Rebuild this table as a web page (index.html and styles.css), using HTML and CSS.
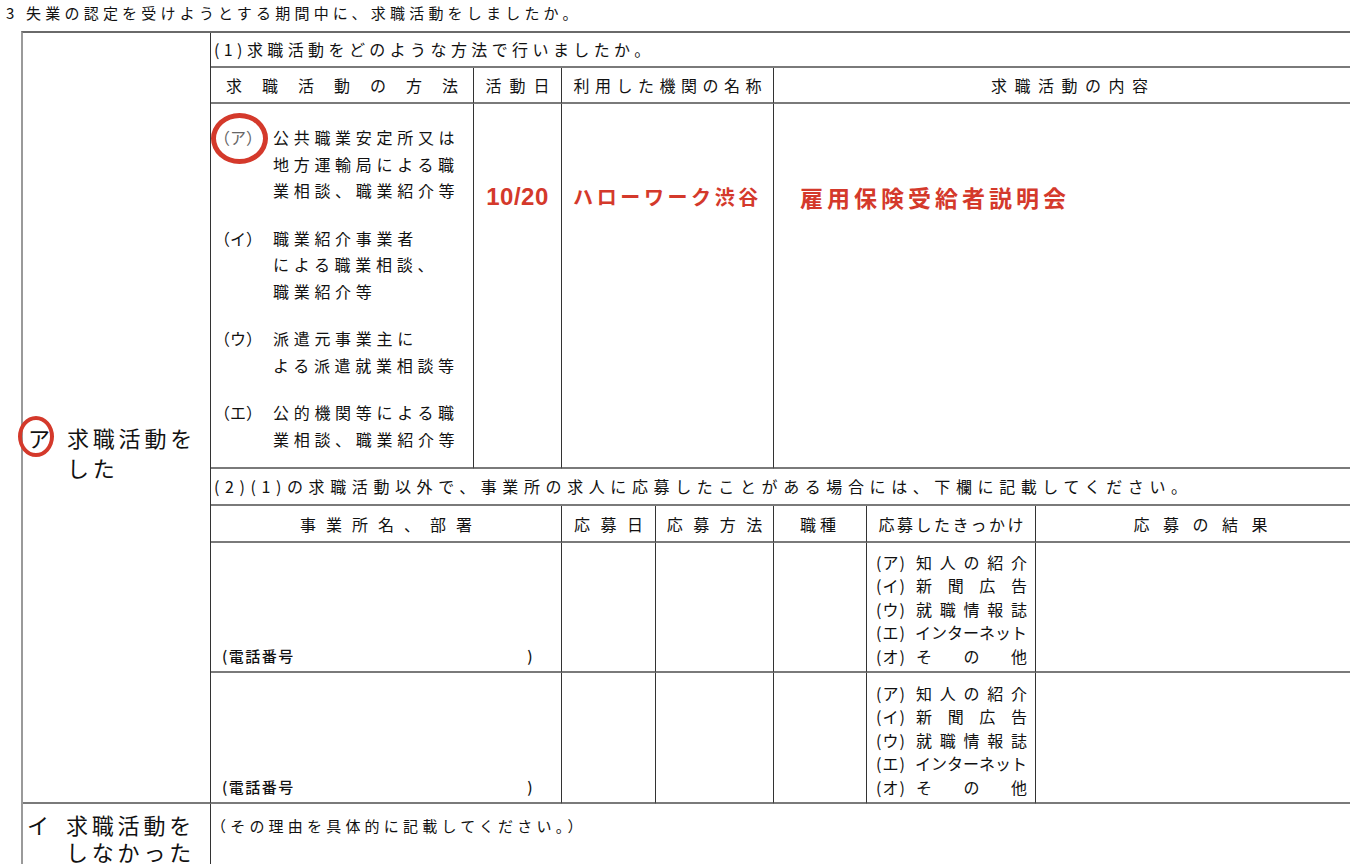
FILE: index.html
```html
<!DOCTYPE html>
<html lang="ja">
<head>
<meta charset="utf-8">
<title>求職活動の状況</title>
<link rel="stylesheet" href="styles.css">
</head>
<body>
<p class="title">3 失業の認定を受けようとする期間中に、求職活動をしましたか。</p>
<div class="form">
  <div class="cell did">
    <div class="choice">
      <span class="choice-mark">ア<span class="ring ring-choice"></span></span>
      <span class="choice-text">求職活動を<br>した</span>
    </div>
  </div>

  <div class="cell q q1">(1)求職活動をどのような方法で行いましたか。</div>

  <div class="cell th th-method r2 c2">求職活動の方法</div>
  <div class="cell th th-day r2 c3">活動日</div>
  <div class="cell th th-agency r2 c45">利用した機関の名称</div>
  <div class="cell th th-content r2 c68">求職活動の内容</div>

  <div class="cell methods r3 c2">
    <div class="item"><span class="label">（ア）<span class="ring ring-method"></span></span><span class="body">公共職業安定所又は<br>地方運輸局による職<br>業相談、職業紹介等</span></div>
    <div class="item"><span class="label">（イ）</span><span class="body">職業紹介事業者<br>による職業相談、<br>職業紹介等</span></div>
    <div class="item"><span class="label">（ウ）</span><span class="body">派遣元事業主に<br>よる派遣就業相談等</span></div>
    <div class="item"><span class="label">（エ）</span><span class="body">公的機関等による職<br>業相談、職業紹介等</span></div>
  </div>
  <div class="cell entry r3 c3"><span class="red date">10/20</span></div>
  <div class="cell entry r3 c45"><span class="red agency">ハローワーク渋谷</span></div>
  <div class="cell entry entry-left r3 c68"><span class="red detail">雇用保険受給者説明会</span></div>

  <div class="cell q q2">(2)(1)の求職活動以外で、事業所の求人に応募したことがある場合には、下欄に記載してください。</div>

  <div class="cell th th-office r5 c23">事業所名、部署</div>
  <div class="cell th th-wide r5 c4">応募日</div>
  <div class="cell th th-wide r5 c5">応募方法</div>
  <div class="cell th r5 c6">職種</div>
  <div class="cell th th-trigger r5 c7">応募したきっかけ</div>
  <div class="cell th th-result r5 c8">応募の結果</div>

  <div class="cell office r6 c23"><span>(電話番号</span><span>)</span></div>
  <div class="cell r6 c4"></div>
  <div class="cell r6 c5"></div>
  <div class="cell r6 c6"></div>
  <div class="cell trigger r6 c7">
    <div class="opt"><span class="olabel">(ア)</span><span class="ochars"><span>知</span><span>人</span><span>の</span><span>紹</span><span>介</span></span></div>
    <div class="opt"><span class="olabel">(イ)</span><span class="ochars"><span>新</span><span>聞</span><span>広</span><span>告</span></span></div>
    <div class="opt"><span class="olabel">(ウ)</span><span class="ochars"><span>就</span><span>職</span><span>情</span><span>報</span><span>誌</span></span></div>
    <div class="opt"><span class="olabel">(エ)</span><span class="ochars"><span>イ</span><span>ン</span><span>タ</span><span>ー</span><span>ネ</span><span>ッ</span><span>ト</span></span></div>
    <div class="opt"><span class="olabel">(オ)</span><span class="ochars"><span>そ</span><span>の</span><span>他</span></span></div>
  </div>
  <div class="cell r6 c8"></div>

  <div class="cell office r7 c23"><span>(電話番号</span><span>)</span></div>
  <div class="cell r7 c4"></div>
  <div class="cell r7 c5"></div>
  <div class="cell r7 c6"></div>
  <div class="cell trigger r7 c7">
    <div class="opt"><span class="olabel">(ア)</span><span class="ochars"><span>知</span><span>人</span><span>の</span><span>紹</span><span>介</span></span></div>
    <div class="opt"><span class="olabel">(イ)</span><span class="ochars"><span>新</span><span>聞</span><span>広</span><span>告</span></span></div>
    <div class="opt"><span class="olabel">(ウ)</span><span class="ochars"><span>就</span><span>職</span><span>情</span><span>報</span><span>誌</span></span></div>
    <div class="opt"><span class="olabel">(エ)</span><span class="ochars"><span>イ</span><span>ン</span><span>タ</span><span>ー</span><span>ネ</span><span>ッ</span><span>ト</span></span></div>
    <div class="opt"><span class="olabel">(オ)</span><span class="ochars"><span>そ</span><span>の</span><span>他</span></span></div>
  </div>
  <div class="cell r7 c8"></div>

  <div class="cell not">
    <div class="choice choice-not">
      <span class="choice-mark">イ</span>
      <span class="choice-text">求職活動を<br>しなかった</span>
    </div>
  </div>
  <div class="cell reason">（その理由を具体的に記載してください。）</div>
</div>
</body>
</html>
```

FILE: styles.css
```css
* { box-sizing: border-box; }

html, body {
  margin: 0;
  padding: 0;
  background: #ffffff;
}

body {
  width: 1350px;
  height: 864px;
  overflow: hidden;
  font-family: "Noto Sans CJK JP", "Noto Sans CJK SC", sans-serif;
  font-weight: 400;
  color: #111111;
}

.title {
  margin: 0;
  height: 31px;
  padding: 3px 0 0 6px;
  font-size: 15px;
  line-height: 20px;
  letter-spacing: 4.2px;
  white-space: nowrap;
}

.form {
  margin-left: 21px;
  width: 1345px;
  display: grid;
  grid-template-columns: 188px 263px 88px 94px 118px 93px 169px 330px;
  grid-template-rows: 35px 36px 365px 37px 37px 130px 131px 70px;
  border-top: 2px solid #6a6a6a;
  border-left: 2px solid #9a9a9a;
}

.cell {
  border-right: 1px solid #333333;
  border-bottom: 2px solid #7a7a7a;
  font-size: 16px;
  line-height: 20px;
  letter-spacing: 4px;
  white-space: nowrap;
  position: relative;
}

/* placement */
.r2 { grid-row: 2; }
.r3 { grid-row: 3; }
.r5 { grid-row: 5; }
.r6 { grid-row: 6; }
.r7 { grid-row: 7; }
.c2 { grid-column: 2; }
.c3 { grid-column: 3; }
.c4 { grid-column: 4; }
.c5 { grid-column: 5; }
.c6 { grid-column: 6; }
.c7 { grid-column: 7; }
.c8 { grid-column: 8; }
.c23 { grid-column: 2 / 4; }
.c45 { grid-column: 4 / 6; }
.c68 { grid-column: 6 / 9; }

.did { grid-column: 1; grid-row: 1 / 8; padding: 389px 0 0 5px; }
.q1 { grid-column: 2 / 9; grid-row: 1; letter-spacing: 4.4px; }
.q2 { grid-column: 2 / 9; grid-row: 4; letter-spacing: 5.6px; }
.not { grid-column: 1; grid-row: 8; padding: 7px 0 0 4px; }
.reason {
  grid-column: 2 / 9;
  grid-row: 8;
  padding: 12px 0 0 0;
  font-size: 15px;
  letter-spacing: 4.2px;
}

/* question rows */
.q {
  display: flex;
  align-items: center;
  padding-left: 3px;
  padding-bottom: 1px;
}

/* headers */
.th {
  display: flex;
  align-items: center;
  justify-content: center;
}
.th-method { letter-spacing: 20px; padding-left: 20px; }
.th-day { letter-spacing: 8px; padding-left: 8px; }
.th-agency { letter-spacing: 5.5px; padding-left: 5.5px; }
.th-content { letter-spacing: 7.5px; padding-left: 7.5px; }
.th-office { letter-spacing: 10px; padding-left: 10px; }
.th-wide { letter-spacing: 10.5px; padding-left: 10.5px; }
.th-trigger { letter-spacing: 2.5px; padding-left: 2.5px; }
.th-result { letter-spacing: 13.5px; padding-left: 13.5px; }

/* choice (ア / イ) */
.choice {
  display: flex;
  font-size: 22px;
  line-height: 30px;
  letter-spacing: 3.8px;
}
.choice-mark {
  position: relative;
  width: 39px;
  letter-spacing: 0;
}
.choice-not {
  line-height: 27px;
}

.ring {
  position: absolute;
  border: 4px solid #d4392b;
  border-radius: 50%;
}
.ring-choice {
  left: -10px;
  top: -6px;
  width: 36px;
  height: 41px;
  border-width: 4.5px;
}
.ring-method {
  left: -3px;
  top: -11px;
  width: 57px;
  height: 51px;
  border-width: 5px;
}

/* methods list */
.methods {
  display: flex;
  flex-direction: column;
  gap: 21px;
  padding: 20px 0 0 3px;
}
.item {
  display: flex;
  line-height: 26.5px;
  letter-spacing: 4.7px;
}
.label {
  position: relative;
  width: 59px;
  letter-spacing: 0;
  align-self: flex-start;
}
.item:first-child .label { color: #666666; }

/* red entries */
.entry {
  display: flex;
  justify-content: center;
  align-items: flex-start;
  padding-top: 78px;
}
.entry-left { justify-content: flex-start; padding-left: 26px; }
.red {
  color: #d4392b;
  font-weight: 700;
  line-height: 30px;
}
.date {
  font-family: "Liberation Sans", Arial, sans-serif;
  font-size: 24px;
  letter-spacing: 0.5px;
}
.agency {
  font-size: 20px;
  letter-spacing: 3.6px;
}
.detail {
  font-size: 23px;
  letter-spacing: 4px;
}

/* office / phone */
.office {
  display: flex;
  align-items: flex-end;
  justify-content: space-between;
  padding: 0 27px 5px 11px;
  font-size: 15px;
  letter-spacing: 1.5px;
  font-weight: 500;
}

/* trigger options */
.trigger {
  display: flex;
  flex-direction: column;
  justify-content: flex-end;
  padding: 0 8px 3px 9px;
  font-size: 16px;
  letter-spacing: 0;
}
.opt {
  display: flex;
  line-height: 23.5px;
}
.olabel {
  width: 40px;
  letter-spacing: 1px;
}
.ochars {
  flex: 1;
  display: flex;
  justify-content: space-between;
}
```
